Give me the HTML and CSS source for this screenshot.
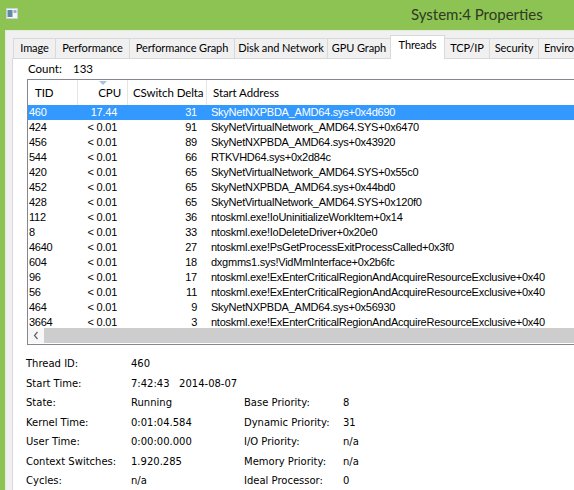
FILE: index.html
```html
<!DOCTYPE html>
<html lang="en">
<head>
    <meta charset="UTF-8">
    <title>System:4 Properties</title>
    <link rel="stylesheet" href="styles.css">
</head>
<body>
    <div class="window">
        <div class="titlebar">
            <svg class="app-icon" width="12" height="11" viewBox="0 0 12 11">
                <rect x="0.5" y="0.5" width="11" height="10" fill="#f4f6f8" stroke="#c8d0d8"/>
                <rect x="1.5" y="2" width="5" height="7" fill="#5f8aa6"/>
                <rect x="7.5" y="2" width="3" height="3" fill="#9bb2c2"/>
            </svg>
            <span class="title">System:4 Properties</span>
        </div>
        <div class="client">
            <ul class="tabs">
                <li class="tab-image">Image</li>
                <li class="tab-perf">Performance</li>
                <li class="tab-graph">Performance Graph</li>
                <li class="tab-disk">Disk and Network</li>
                <li class="tab-gpu">GPU Graph</li>
                <li class="tab-threads active">Threads</li>
                <li class="tab-tcp">TCP/IP</li>
                <li class="tab-security">Security</li>
                <li class="tab-env">Environment</li>
            </ul>
            <div class="panel">
                <div class="count"><span class="count-label">Count:</span><span>133</span></div>
                <div class="listview">
                    <div class="lv-header">
                        <div class="col-tid">TID</div>
                        <div class="col-cpu"><span class="sort-arrow"></span>CPU</div>
                        <div class="col-cs">CSwitch Delta</div>
                        <div class="col-addr">Start Address</div>
                    </div>
                    <div class="lv-body">
                        <div class="lv-row selected"><span>460</span><span>17.44</span><span>31</span><span>SkyNetNXPBDA_AMD64.sys+0x4d690</span></div>
                        <div class="lv-row"><span>424</span><span>&lt; 0.01</span><span>91</span><span>SkyNetVirtualNetwork_AMD64.SYS+0x6470</span></div>
                        <div class="lv-row"><span>456</span><span>&lt; 0.01</span><span>89</span><span>SkyNetNXPBDA_AMD64.sys+0x43920</span></div>
                        <div class="lv-row"><span>544</span><span>&lt; 0.01</span><span>66</span><span>RTKVHD64.sys+0x2d84c</span></div>
                        <div class="lv-row"><span>420</span><span>&lt; 0.01</span><span>65</span><span>SkyNetVirtualNetwork_AMD64.SYS+0x55c0</span></div>
                        <div class="lv-row"><span>452</span><span>&lt; 0.01</span><span>65</span><span>SkyNetNXPBDA_AMD64.sys+0x44bd0</span></div>
                        <div class="lv-row"><span>428</span><span>&lt; 0.01</span><span>65</span><span>SkyNetVirtualNetwork_AMD64.SYS+0x120f0</span></div>
                        <div class="lv-row"><span>112</span><span>&lt; 0.01</span><span>36</span><span>ntoskml.exe!IoUninitializeWorkItem+0x14</span></div>
                        <div class="lv-row"><span>8</span><span>&lt; 0.01</span><span>33</span><span>ntoskml.exe!IoDeleteDriver+0x20e0</span></div>
                        <div class="lv-row"><span>4640</span><span>&lt; 0.01</span><span>27</span><span>ntoskml.exe!PsGetProcessExitProcessCalled+0x3f0</span></div>
                        <div class="lv-row"><span>604</span><span>&lt; 0.01</span><span>18</span><span>dxgmms1.sys!VidMmInterface+0x2b6fc</span></div>
                        <div class="lv-row"><span>96</span><span>&lt; 0.01</span><span>17</span><span>ntoskml.exe!ExEnterCriticalRegionAndAcquireResourceExclusive+0x40</span></div>
                        <div class="lv-row"><span>56</span><span>&lt; 0.01</span><span>11</span><span>ntoskml.exe!ExEnterCriticalRegionAndAcquireResourceExclusive+0x40</span></div>
                        <div class="lv-row"><span>464</span><span>&lt; 0.01</span><span>9</span><span>SkyNetNXPBDA_AMD64.sys+0x56930</span></div>
                        <div class="lv-row"><span>3664</span><span>&lt; 0.01</span><span>3</span><span>ntoskml.exe!ExEnterCriticalRegionAndAcquireResourceExclusive+0x40</span></div>
                    </div>
                    <div class="hscroll">
                        <div class="scroll-btn">
                            <svg width="16" height="15" viewBox="0 0 16 15">
                                <path d="M9.5 4 L6.5 7.5 L9.5 11" fill="none" stroke="#606060" stroke-width="1.2"/>
                            </svg>
                        </div>
                        <div class="scroll-thumb"></div>
                    </div>
                </div>
                <div class="details">
                    <span>Thread ID:</span><span>460</span><span></span><span></span>
                    <span>Start Time:</span><span class="wide">7:42:43&nbsp;&nbsp;&nbsp;2014-08-07</span><span></span>
                    <span>State:</span><span>Running</span><span>Base Priority:</span><span>8</span>
                    <span>Kernel Time:</span><span>0:01:04.584</span><span>Dynamic Priority:</span><span>31</span>
                    <span>User Time:</span><span>0:00:00.000</span><span>I/O Priority:</span><span>n/a</span>
                    <span>Context Switches:</span><span>1.920.285</span><span>Memory Priority:</span><span>n/a</span>
                    <span>Cycles:</span><span>n/a</span><span>Ideal Processor:</span><span>0</span>
                </div>
            </div>
        </div>
    </div>
</body>
</html>
```

FILE: styles.css
```css
body {
    margin: 0;
    padding: 0;
    width: 574px;
    height: 490px;
    overflow: hidden;
    background-color: #8dc352;
    font-family: Lato, "Noto Sans", Arial, sans-serif;
    color: #000;
}
.window {
    width: 660px;
    height: 490px;
    background-color: #8dc352;
    padding-left: 5px;
    box-sizing: border-box;
    display: flex;
    flex-direction: column;
}
.titlebar {
    height: 30px;
    display: flex;
    align-items: center;
    flex-shrink: 0;
}
.app-icon {
    margin-left: 1px;
    margin-top: -3px;
}
.title {
    margin-left: 393px;
    font-size: 15px;
    color: #2e3a22;
    margin-top: -2px;
}
.client {
    flex: 1;
    background-color: #f0f0f0;
    border-left: 1px solid #e2ecd8;
    border-top: 1px solid #e2ecd8;
    padding: 3px 0 0 6px;
    display: flex;
    flex-direction: column;
}
.tabs {
    list-style: none;
    margin: 0 0 0 1px;
    padding: 0;
    display: flex;
    align-items: flex-end;
    height: 24px;
    position: relative;
    z-index: 1;
}
.tabs li {
    box-sizing: border-box;
    height: 20px;
    line-height: 17px;
    text-align: center;
    border: 1px solid #d9d9d9;
    border-bottom: none;
    margin-right: -1px;
    font-size: 11px;
    letter-spacing: -0.1px;
    white-space: nowrap;
    background-color: #f0f0f0;
    flex-shrink: 0;
}
.tabs li.active {
    height: 24px;
    line-height: 18px;
    background-color: #fff;
    margin-bottom: -1px;
    position: relative;
}
.tab-image { width: 43px; }
.tab-perf { width: 75px; }
.tab-graph { width: 106px; }
.tab-disk { width: 94px; }
.tab-gpu { width: 64px; }
.tab-threads { width: 55px; }
.tab-tcp { width: 46px; }
.tab-security { width: 50px; }
.tabs li.tab-env { width: 80px; text-align: left; padding-left: 5px; }
.panel {
    flex: 1;
    background-color: #fff;
    border: 1px solid #d9d9d9;
    padding-left: 14px;
}
.count {
    height: 20px;
    line-height: 19px;
    font-size: 11.5px;
    padding-left: 1px;
}
.count-label {
    display: inline-block;
    width: 45px;
}
.listview {
    border: 1px solid #828790;
    border-right: none;
}
.lv-header,
.lv-row {
    display: grid;
    grid-template-columns: 50px 50px 79px 1fr;
    white-space: nowrap;
}
.lv-header {
    height: 25px;
    line-height: 25px;
    font-size: 11.5px;
    letter-spacing: -0.1px;
}
.lv-header div {
    border-right: 1px solid #e5e5e5;
    position: relative;
}
.col-tid {
    padding-left: 7px;
}
.col-cpu {
    text-align: right;
    padding-right: 6px;
}
.col-cs {
    padding-left: 5px;
}
.col-addr {
    padding-left: 6px;
    border-right: none !important;
}
.sort-arrow {
    position: absolute;
    left: 21px;
    top: 1px;
    width: 0;
    height: 0;
    border-left: 4px solid transparent;
    border-right: 4px solid transparent;
    border-top: 4px solid #a9c2dc;
}
.lv-body {
    height: 223px;
    overflow: hidden;
}
.lv-row {
    height: 15px;
    line-height: 15px;
    font-family: "Liberation Sans", Arial, sans-serif;
    font-size: 11px;
    letter-spacing: -0.25px;
}
.lv-row span:nth-child(1) {
    padding-left: 1px;
}
.lv-row span:nth-child(2) {
    text-align: right;
    padding-right: 11px;
}
.lv-row span:nth-child(3) {
    text-align: right;
    padding-right: 10px;
}
.lv-row span:nth-child(4) {
    padding-left: 4px;
}
.lv-row.selected {
    background-color: #3399ff;
    color: #fff;
}
.hscroll {
    height: 15px;
    display: flex;
    border-bottom: 1px solid #fff;
}
.scroll-btn {
    width: 16px;
    height: 15px;
    background-color: #f7f7f7;
}
.scroll-btn svg {
    display: block;
}
.scroll-thumb {
    flex: 1;
    background-color: #cdcdcd;
}
.details {
    display: grid;
    grid-template-columns: 105px 113px 99px 1fr;
    grid-auto-rows: 19.5px;
    align-items: center;
    margin: 9px 0 0 -1px;
    font-family: "DejaVu Sans", Tahoma, sans-serif;
    font-size: 10px;
    white-space: nowrap;
}
.details .wide {
    grid-column: span 2;
}
```
